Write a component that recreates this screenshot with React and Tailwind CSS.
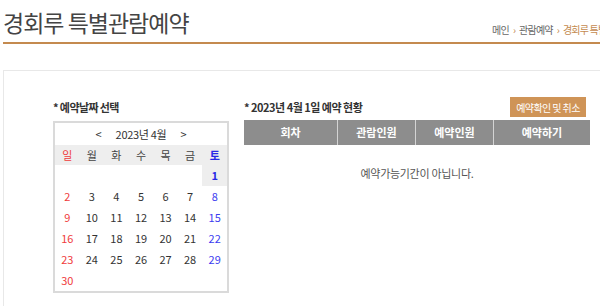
import React from 'react';

const days = [
  [null, null, null, null, null, null, 1],
  [2, 3, 4, 5, 6, 7, 8],
  [9, 10, 11, 12, 13, 14, 15],
  [16, 17, 18, 19, 20, 21, 22],
  [23, 24, 25, 26, 27, 28, 29],
  [30, null, null, null, null, null, null],
];

const weekdays = ['일', '월', '화', '수', '목', '금', '토'];

const dayColor = (i) => (i === 0 ? 'text-[#f03c3c]' : i === 6 ? 'text-[#3c3cf0]' : 'text-[#333]');

const App = () => {
  return (
    <div className="w-[600px] h-[306px] overflow-hidden bg-white text-[#333] font-['Noto_Sans_CJK_KR','Noto_Sans',sans-serif]">
      {/* Title */}
      <div className="ml-[3px] w-[637px] h-[44px] flex items-end justify-between border-b-2 border-[#c48a4f]">
        <h1 className="self-start pt-[7px] leading-[30px] text-[23px] tracking-[-1px] font-normal text-[#444]">
          경회루 특별관람예약
        </h1>
        <div className="pb-[5px] flex items-center gap-[4px] text-[10px] leading-[14px] tracking-[-0.8px] text-[#666]">
          <span>메인</span>
          <span className="text-[#c48a4f]">›</span>
          <span>관람예약</span>
          <span className="text-[#c48a4f]">›</span>
          <span className="text-[#c48a4f]">경회루 특별관람예약</span>
        </div>
      </div>

      {/* Content box */}
      <div className="mt-[26px] ml-[3px] w-[636px] h-[300px] border border-[#e8e8e8] pt-[26px] pl-[49px] flex gap-[15px]">
        {/* Calendar */}
        <div className="w-[176px]">
          <div className="h-[20px] flex items-center text-[11px] font-bold tracking-[-0.6px]">* 예약날짜 선택</div>
          <div className="mt-[4px] border-2 border-[#dadada]">
            <div className="h-[22px] flex items-center justify-center gap-[14px] text-[11px]">
              <span>&lt;</span>
              <span className="tracking-[-0.3px]">2023년 4월</span>
              <span>&gt;</span>
            </div>
            <div className="grid grid-cols-7 h-[20px] bg-[#eeeeee] text-[11px]">
              {weekdays.map((w, i) => (
                <div key={w} className={`flex items-center justify-center ${i === 0 ? 'text-[#f03c3c]' : i === 6 ? 'text-[#2828e6] font-bold' : 'text-[#444]'}`}>
                  {w}
                </div>
              ))}
            </div>
            {days.map((row, r) => (
              <div key={r} className="grid grid-cols-7 h-[21px] text-[11px]">
                {row.map((d, i) => (
                  <div
                    key={i}
                    className={`flex items-center justify-center ${dayColor(i)} ${d === 1 ? 'bg-[#eeeeee] font-bold text-[#2828e6]' : ''}`}
                  >
                    {d}
                  </div>
                ))}
              </div>
            ))}
          </div>
        </div>

        {/* Reservation status */}
        <div className="w-[346px]">
          <div className="h-[20px] flex items-center justify-between">
            <span className="text-[11px] font-bold tracking-[-0.5px]">* 2023년 4월 1일 예약 현황</span>
            <button className="mr-[4px] h-[20px] w-[76px] bg-[#cf9457] text-white text-[10px] tracking-[-0.6px]">
              예약확인 및 취소
            </button>
          </div>
          <div className="mt-[3px]">
            <div className="flex h-[25px] bg-[#8d8d8d] text-white text-[11px] font-bold">
              <div className="w-[93px] flex items-center justify-center">회차</div>
              <div className="w-[78px] flex items-center justify-center border-l border-[#d4d4d4]">관람인원</div>
              <div className="w-[78px] flex items-center justify-center border-l border-[#d4d4d4]">예약인원</div>
              <div className="flex-1 flex items-center justify-center border-l border-[#d4d4d4]">예약하기</div>
            </div>
            <div className="py-[18px] leading-[20px] text-center text-[11px] text-[#555] tracking-[-0.3px]">
              예약가능기간이 아닙니다.
            </div>
          </div>
        </div>
      </div>
    </div>
  );
};

export default App;
